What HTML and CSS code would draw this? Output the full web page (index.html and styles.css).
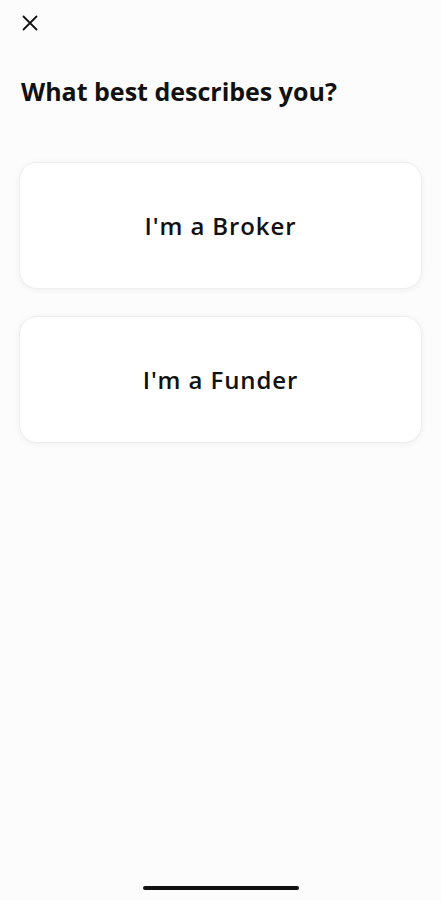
FILE: index.html
```html
<!DOCTYPE html>
<html lang="en">
<head>
    <meta charset="UTF-8">
    <meta name="viewport" content="width=device-width, initial-scale=1.0">
    <title>Choose role</title>
    <link rel="stylesheet" href="styles.css">
</head>
<body>
    <div class="screen">
        <header class="top-bar">
            <button class="close-button" aria-label="Close">
                <svg width="16" height="16" viewBox="0 0 16 16">
                    <path d="M1.5 1.5 L14.5 14.5 M14.5 1.5 L1.5 14.5" stroke="#111" stroke-width="1.8" stroke-linecap="round"/>
                </svg>
            </button>
        </header>

        <h1 class="question">What best describes you?</h1>

        <div class="choices">
            <button class="choice">I'm a Broker</button>
            <button class="choice">I'm a Funder</button>
        </div>

        <div class="home-indicator"></div>
    </div>
</body>
</html>
```

FILE: styles.css
```css
/* Basic styling */
body {
    margin: 0;
    padding: 0;
    font-family: "Open Sans", Arial, sans-serif;
    background-color: #fcfcfc;
    color: #111;
}

.screen {
    height: 900px;
    display: flex;
    flex-direction: column;
    box-sizing: border-box;
    padding: 0 19px;
}

.top-bar {
    height: 46px;
    display: flex;
    align-items: center;
}

.close-button {
    background: none;
    border: none;
    padding: 0;
    margin-left: 3px;
    width: 16px;
    height: 16px;
    cursor: pointer;
}

.close-button svg {
    display: block;
}

.question {
    font-size: 25px;
    font-weight: 700;
    margin: 28px 0 0 2px;
    line-height: 34px;
}

.choices {
    display: flex;
    flex-direction: column;
    gap: 27px;
    margin-top: 54px;
}

.choice {
    height: 127px;
    background-color: #fff;
    border: 1px solid #eeeeee;
    border-radius: 18px;
    box-shadow: 0 1px 6px rgba(0, 0, 0, 0.06);
    font-family: "Open Sans", Arial, sans-serif;
    font-size: 24px;
    font-weight: 600;
    letter-spacing: 0.9px;
    color: #111;
    cursor: pointer;
}

.home-indicator {
    margin: auto auto 10px;
    width: 156px;
    height: 4px;
    border-radius: 2px;
    background-color: #111;
}
```
